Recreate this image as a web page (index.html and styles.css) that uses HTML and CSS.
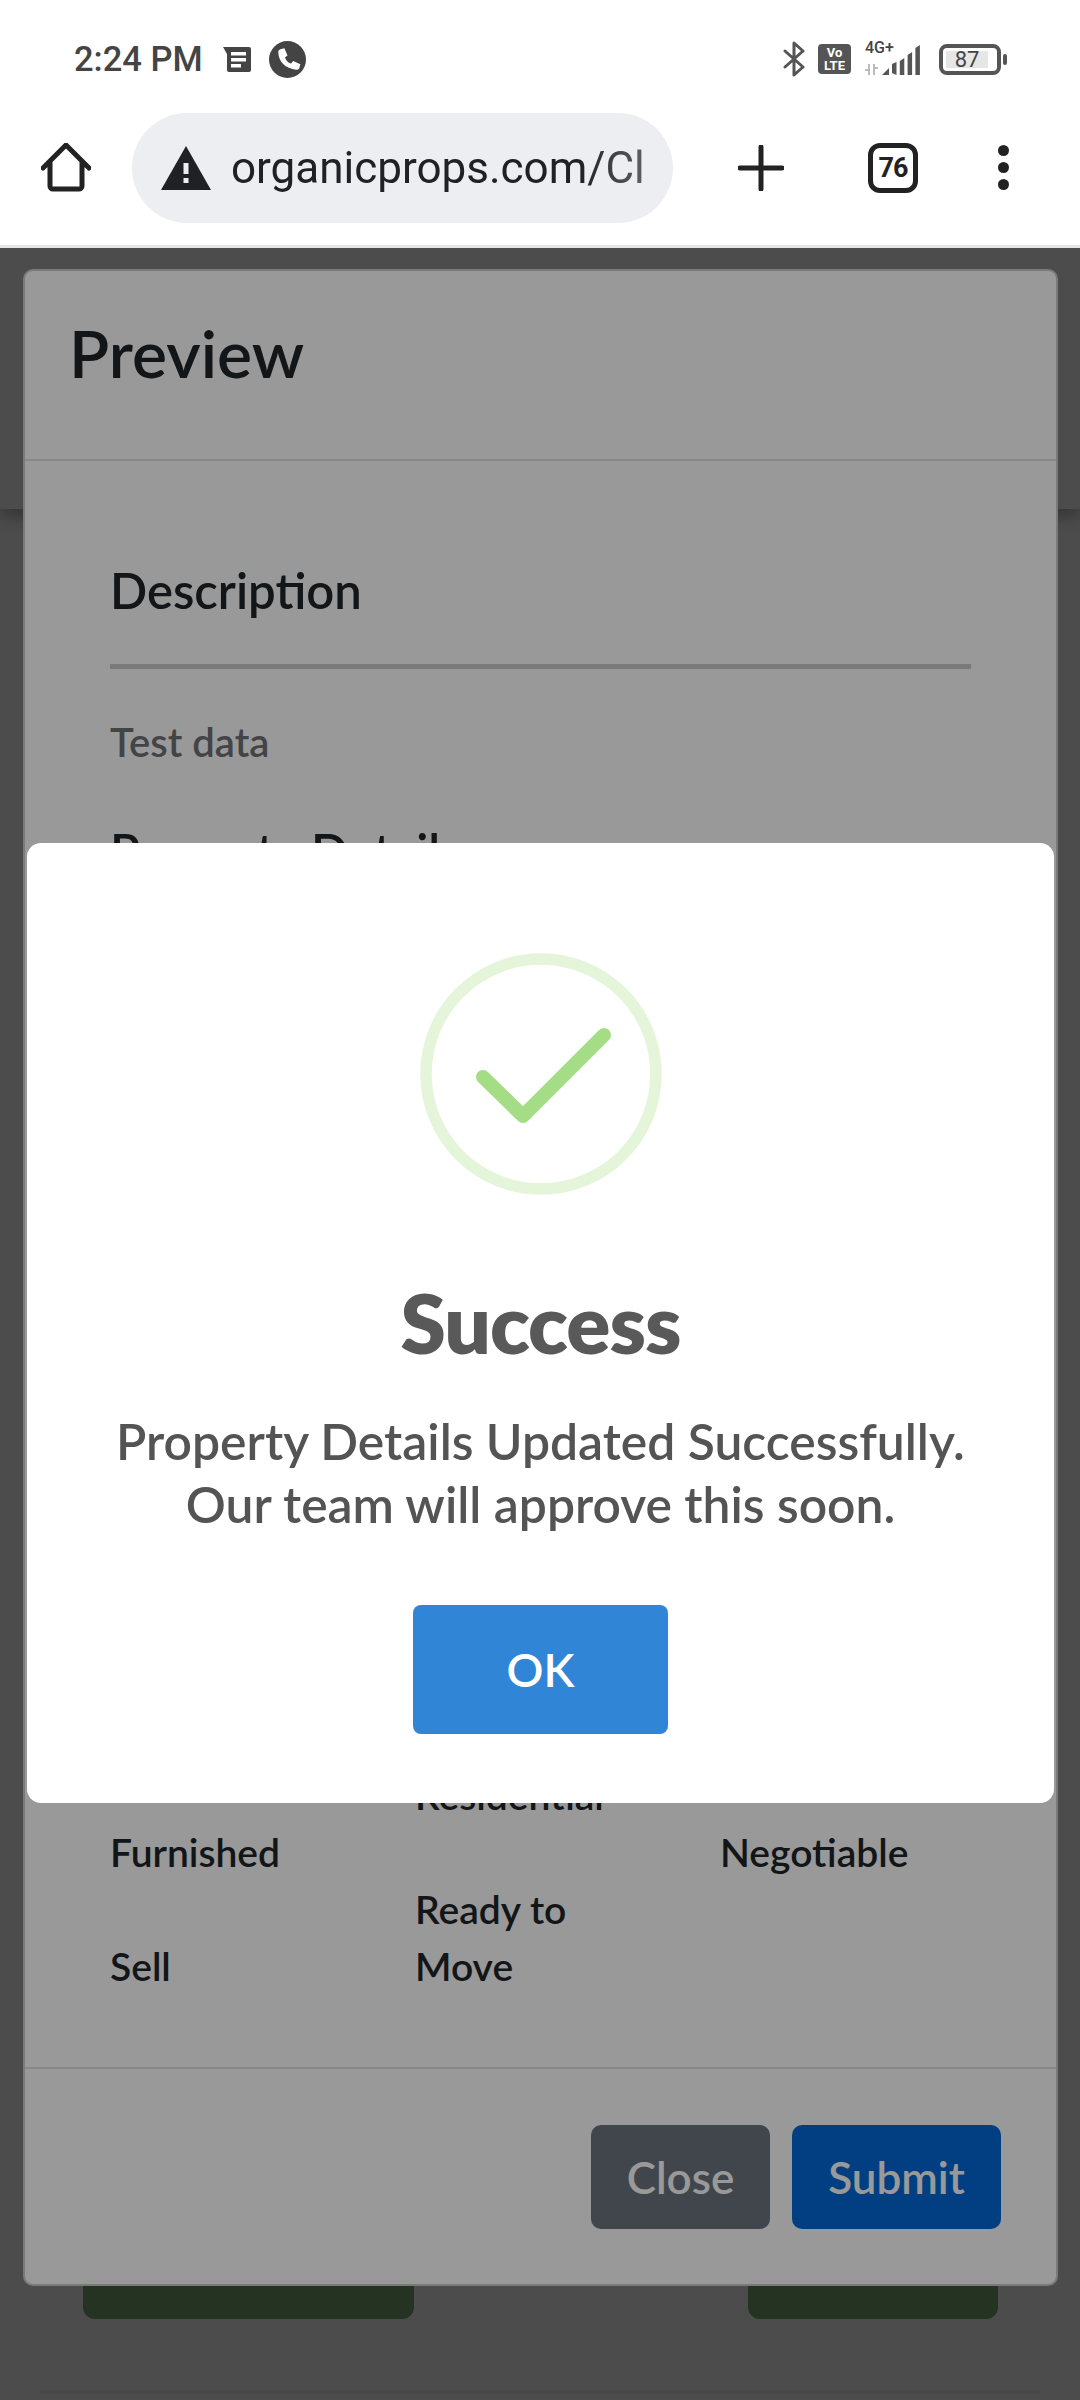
FILE: index.html
```html
<!DOCTYPE html>
<html lang="en">
<head>
  <meta charset="UTF-8" />
  <meta name="viewport" content="width=device-width, initial-scale=1.0" />
  <title>Preview - Organic Props</title>
  <link rel="stylesheet" href="styles.css">
</head>
<body>

<!-- Phone status bar -->
<div class="status-bar">
  <div class="status-left">
    <span class="time">2:24 PM</span>
    <svg class="ic-msg" viewBox="0 0 30 26"><path fill="#444" d="M1 1h26a2 2 0 0 1 2 2v21a2 2 0 0 1-2 2H7a2 2 0 0 1-2-2V8z"/><path fill="#fff" d="M9 6h15v3.500H9zM9 12h15v3.500H9zM9 18h10v3.500H9z"/></svg>
    <svg class="ic-call" viewBox="0 0 36 36"><circle cx="18" cy="18" r="18" fill="#444"/><path fill="#fff" d="M11 8l4 -1 3 7-2.500 2c1 3 3 5 6 6l2-2.500 7 3-1 4c-.5 1-2 1.500-3 1.500C16 27 9 20 9 10.500 9 9.500 10 8.300 11 8z"/></svg>
  </div>
  <div class="status-right">
    <svg class="ic-bt" viewBox="0 0 22 36"><path fill="none" stroke="#555" stroke-width="3" stroke-linecap="round" stroke-linejoin="round" d="M2 10l18 16-9 8V2l9 8L2 26"/></svg>
    <div class="volte"><span>Vo</span><span>LTE</span></div>
    <div class="network">
      <span class="net-label">4G+</span>
      <svg class="ic-signal" viewBox="0 0 58 32"><path fill="#bbb" d="M3 21h2v11H3zM0 26h3v2H0zM8 21h2v11H8zM10 24h3v2h-3z"/><path fill="#555" d="M17 32l7-7v7zM27 30V21l4.500-2v13zM34.800 32V18l4.500-3v17zM42.600 32V12l4.500-3v23zM50.400 32V5l4.500-3v30z"/></svg>
    </div>
    <div class="battery"><span class="battery-level">87</span></div>
    <span class="battery-tip"></span>
  </div>
</div>

<!-- Browser toolbar -->
<div class="toolbar">
  <svg class="ic-home" viewBox="0 0 50 50"><path fill="none" stroke="#222" stroke-width="5" stroke-linecap="round" stroke-linejoin="round" d="M2 25L25 2l23 23M9 19v24a3 3 0 0 0 3 3h26a3 3 0 0 0 3-3V19"/></svg>
  <div class="url-pill">
    <svg class="ic-warn" viewBox="0 0 50 44"><path fill="#202124" d="M25 0l25 44H0z"/><path fill="#eceef2" d="M22.500 17h5v11h-5zM22.500 32h5v5h-5z"/></svg>
    <span class="url-text">organicprops.com/Cl</span>
  </div>
  <svg class="ic-plus" viewBox="0 0 46 46"><path stroke="#222" stroke-width="5" stroke-linecap="round" d="M23 2v42M2 23h42"/></svg>
  <div class="tabs">76</div>
  <div class="dots"><span></span><span></span><span></span></div>
</div>
<div class="toolbar-line"></div>

<!-- Web page -->
<div class="webview">
  <div class="page">
    <div class="page-nav"></div>
    <div class="page-actions">
      <div class="green-btn left"></div>
      <div class="green-btn right"></div>
    </div>
    <div class="page-rule"></div>
  </div>

  <div class="backdrop"></div>

  <div class="preview">
    <div class="preview-head"><h2>Preview</h2></div>
    <div class="preview-body">
      <h3>Description</h3>
      <p class="muted">Test data</p>
      <h3 class="no-rule">Property Details</h3>
      <div class="details">
        <div></div>
        <div>Residential</div>
        <div></div>
        <div>Furnished</div>
        <div></div>
        <div>Negotiable</div>
        <div></div>
        <div>Ready to</div>
        <div></div>
        <div>Sell</div>
        <div>Move</div>
        <div></div>
      </div>
    </div>
    <div class="preview-foot">
      <button class="btn btn-close">Close</button>
      <button class="btn btn-submit">Submit</button>
    </div>
  </div>

  <!-- Success popup -->
  <div class="alert-overlay">
    <div class="alert-box">
      <svg class="ic-success" viewBox="0 0 242 242">
        <circle cx="121" cy="121" r="115" fill="none" stroke="#e4f5da" stroke-width="11.500"/>
        <path fill="none" stroke="#a5dc86" stroke-width="14" stroke-linecap="round" stroke-linejoin="round" d="M63 124l40 39 81-81"/>
      </svg>
      <h2>Success</h2>
      <p>Property Details Updated Successfully.<br>Our team will approve this soon.</p>
      <button class="alert-ok">OK</button>
    </div>
  </div>
</div>

</body>
</html>
```

FILE: styles.css
```css
* {
  margin: 0;
  padding: 0;
  box-sizing: border-box;
}

body {
  width: 1080px;
  height: 2400px;
  overflow: hidden;
  background: #fff;
  font-family: 'Lato', sans-serif;
}

.status-bar {
  height: 100px;
  padding: 37px 73px 0 74px;
  display: flex;
  justify-content: space-between;
  align-items: flex-start;
  font-family: 'Roboto', sans-serif;
}

.status-left {
  display: flex;
  align-items: center;
}

.time {
  font-size: 34.5px;
  font-weight: 500;
  color: #444;
  line-height: 44px;
}

.ic-msg {
  width: 30px;
  height: 26px;
  margin-left: 19px;
}

.ic-call {
  width: 37px;
  height: 37px;
  margin-left: 17px;
}

.status-right {
  display: flex;
  align-items: center;
  height: 44px;
}

.ic-bt {
  width: 22px;
  height: 36px;
}

.volte {
  width: 33px;
  height: 30px;
  margin-left: 13px;
  background: #555;
  border-radius: 4px;
  color: #fff;
  font-size: 13px;
  font-weight: 700;
  line-height: 13px;
  display: flex;
  flex-direction: column;
  align-items: center;
  justify-content: center;
}

.network {
  width: 58px;
  height: 34px;
  margin-left: 14px;
  position: relative;
}

.net-label {
  position: absolute;
  top: -2px;
  left: 0;
  font-size: 16px;
  font-weight: 500;
  line-height: 16px;
  color: #444;
}

.ic-signal {
  width: 58px;
  height: 32px;
  display: block;
  margin-top: 1px;
}

.battery {
  width: 62px;
  height: 31px;
  margin-left: 16px;
  border: 4px solid #555;
  border-radius: 8px;
  padding: 3px;
}

.battery-level {
  display: block;
  width: 42px;
  height: 17px;
  background: #e6e6e6;
  font-size: 22px;
  line-height: 17px;
  text-align: center;
  color: #444;
}

.battery-tip {
  width: 4px;
  height: 11px;
  margin-left: 2px;
  background: #555;
  border-radius: 2px;
}

.toolbar {
  height: 145px;
  display: flex;
  align-items: center;
  padding-bottom: 10px;
}

.ic-home {
  width: 50px;
  height: 50px;
  margin-left: 41px;
}

.url-pill {
  width: 541px;
  height: 110px;
  margin-left: 41px;
  background: #eceef2;
  border-radius: 55px;
  display: flex;
  align-items: center;
  padding-left: 29px;
  overflow: hidden;
}

.ic-warn {
  width: 50px;
  height: 44px;
  flex-shrink: 0;
}

.url-text {
  margin-left: 20px;
  font-family: 'Roboto', sans-serif;
  font-size: 44px;
  color: #202124;
  white-space: nowrap;
  -webkit-mask-image: linear-gradient(to right, #000 84%, rgba(0,0,0,0.7) 100%);
  mask-image: linear-gradient(to right, #000 84%, rgba(0,0,0,0.7) 100%);
}

.ic-plus {
  width: 46px;
  height: 46px;
  margin-left: 65px;
}

.tabs {
  width: 50px;
  height: 50px;
  margin-left: 84px;
  border: 5px solid #222;
  border-radius: 12px;
  font-family: 'Roboto', sans-serif;
  font-size: 27px;
  font-weight: 700;
  line-height: 40px;
  letter-spacing: -1px;
  text-align: center;
  color: #222;
}

.dots {
  margin-left: 80px;
  display: flex;
  flex-direction: column;
  gap: 6px;
}

.dots span {
  width: 11px;
  height: 11px;
  border-radius: 50%;
  background: #222;
}

.toolbar-line {
  height: 3px;
  background: #e6e6e6;
}

.webview {
  position: relative;
  height: 2152px;
  overflow: hidden;
}

.page {
  height: 100%;
  display: flex;
  flex-direction: column;
}

.page-nav {
  height: 261px;
  box-shadow: 0 8px 16px rgba(0,0,0,0.3);
}

.page-actions {
  margin-top: 1710px;
  display: flex;
  padding: 0 82px 0 83px;
  justify-content: space-between;
}

.page-actions .green-btn {
  height: 100px;
  background: #78aa75;
  border-radius: 12px;
}

.green-btn.left {
  width: 331px;
}

.green-btn.right {
  width: 250px;
}

.page-rule {
  margin: 71px 40px 0;
  height: 4px;
  background: #eee;
}

.backdrop {
  position: absolute;
  inset: 0;
  background: rgba(0,0,0,0.5);
}

.preview {
  position: absolute;
  top: 21px;
  left: 23px;
  width: 1035px;
  height: 2017px;
  background: #fff;
  border: 2px solid rgba(0,0,0,0.2);
  border-radius: 10px;
  display: flex;
  flex-direction: column;
  color: #212529;
}

.preview-head {
  height: 190px;
  padding: 42px 44px 0;
  border-bottom: 2px solid #dee2e6;
}

.preview-head h2 {
  font-size: 66px;
  font-weight: 600;
  line-height: 80px;
}

.preview-body {
  flex: 1;
  padding: 99px 85px 0;
}

.preview-body h3 {
  font-size: 49px;
  font-weight: 600;
  line-height: 60px;
  padding-bottom: 44px;
  border-bottom: 5px solid #ccc;
}

.preview-body h3.no-rule {
  margin-top: 54px;
  border-bottom: none;
}

.muted {
  margin-top: 48px;
  font-size: 40px;
  line-height: 50px;
  font-weight: 600;
  color: #6e7276;
}

.details {
  margin-top: 842px;
  display: grid;
  grid-template-columns: 305px 305px 250px;
  grid-auto-rows: 57px;
  font-size: 39px;
  font-weight: 600;
  line-height: 57px;
}

.preview-foot {
  height: 217px;
  border-top: 2px solid #dee2e6;
  padding: 56px 55px 0 0;
  display: flex;
  justify-content: flex-end;
  align-items: flex-start;
  gap: 22px;
}

.btn {
  height: 104px;
  border: none;
  border-radius: 10px;
  color: #fff;
  font-family: inherit;
  font-size: 44px;
  font-weight: 600;
}

.btn-close {
  width: 179px;
  background: #6c757d;
}

.btn-submit {
  width: 209px;
  background: #026ad9;
}

.alert-overlay {
  position: absolute;
  inset: 0;
  background: rgba(0,0,0,0.4);
}

.alert-box {
  position: absolute;
  top: 595px;
  left: 27px;
  width: 1027px;
  height: 960px;
  background: #fff;
  border-radius: 14px;
  display: flex;
  flex-direction: column;
  align-items: center;
  padding-top: 110px;
}

.ic-success {
  width: 242px;
  height: 242px;
}

.alert-box h2 {
  margin-top: 82px;
  font-size: 82px;
  font-weight: 800;
  line-height: 90px;
  letter-spacing: -1px;
  color: #595959;
}

.alert-box p {
  margin-top: 43px;
  font-size: 49.8px;
  font-weight: 600;
  line-height: 63px;
  text-align: center;
  color: #545454;
}

.alert-ok {
  width: 255px;
  height: 129px;
  margin-top: 69px;
  border: none;
  border-radius: 8px;
  background: #3085d6;
  color: #fff;
  font-family: inherit;
  font-size: 46px;
  font-weight: 600;
}
```
